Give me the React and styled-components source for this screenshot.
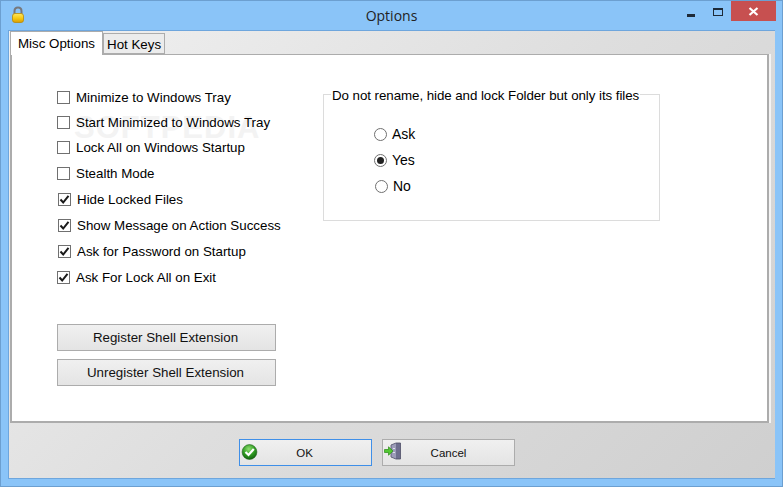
import React from 'react'
import styled, { createGlobalStyle } from 'styled-components'

const GlobalStyle = createGlobalStyle`
  html, body { margin: 0; padding: 0; background: #8ac4f8; }
  * { box-sizing: border-box; }
`

const Window = styled.div`
  width: 783px;
  height: 487px;
  display: flex;
  flex-direction: column;
  padding: 0 7px 7px;
  background: #8ac4f8;
  border: 1px solid #6c9fd0;
  font-family: "Liberation Sans", Arial, sans-serif;
  font-size: 13.33px;
  color: #000;
  overflow: hidden;
`

const TitleBar = styled.div`
  height: 29px;
  flex: none;
  position: relative;
  display: flex;
  align-items: center;
  justify-content: center;
  font-family: "Open Sans", sans-serif;
  font-size: 14px;
  color: #222;
  padding-bottom: 1px;
`

const LockIcon = styled.svg`
  position: absolute;
  left: 2px;
  top: 5px;
`

const WinButtons = styled.div`
  position: absolute;
  right: -1px;
  top: 0;
  display: flex;
  align-items: flex-start;
`

const WinIconButton = styled.div`
  width: ${p => p.$w}px;
  height: 20px;
  display: flex;
  align-items: center;
  justify-content: center;
`

const CloseButton = styled(WinIconButton)`
  background: #c75050;
`

const MinGlyph = styled.div`
  width: 8px;
  height: 3px;
  background: #1e2a38;
  margin-top: 8px;
`

const MaxGlyph = styled.div`
  width: 10px;
  height: 8px;
  border: 1px solid #1e2a38;
  border-top-width: 2px;
  margin-top: 2px;
`

const Client = styled.div`
  flex: 1;
  min-height: 0;
  display: flex;
  flex-direction: column;
  padding: 0 6px 0 1px;
  background: linear-gradient(135deg, #f1f1f1 0%, #dedede 50%, #cfcfcf 100%);
  border: 1px solid #6ea6dd;
  border-width: 1px 0 1px 1px;
`

const TabStrip = styled.div`
  display: flex;
  align-items: flex-end;
  height: 23px;
  flex: none;
  position: relative;
  z-index: 1;
`

const Tab = styled.div`
  height: ${p => (p.$active ? 24 : 21)}px;
  width: ${p => p.$w}px;
  margin-bottom: ${p => (p.$active ? -1 : 0)}px;
  padding-left: ${p => (p.$active ? 7 : 3)}px;
  padding-top: ${p => (p.$active ? 3 : 2)}px;
  line-height: 17px;
  font-size: 13.33px;
  background: ${p => (p.$active ? '#fff' : '#ececec')};
  border: 1px solid #acacac;
  border-bottom: ${p => (p.$active ? 'none' : '1px solid #acacac')};
`

const Page = styled.div`
  height: 369px;
  flex: none;
  background: #fff;
  border: 2px solid #acacac;
  border-width: 1px 2px 2px 2px;
  box-shadow: 2px 0 0 #f4f4f4;
  display: flex;
  position: relative;
  padding: 30px 0 0 45px;
`

const Watermark = styled.div`
  position: absolute;
  left: 62px;
  top: 55px;
  font-size: 31px;
  font-weight: 700;
  letter-spacing: 1px;
  color: #f3f3f3;
`

const LeftColumn = styled.div`
  width: 266px;
  flex: none;
  display: flex;
  flex-direction: column;
  position: relative;
`

const CheckRow = styled.div`
  height: ${p => p.$h}px;
  display: flex;
  align-items: center;
  gap: 6px;
  margin-left: ${p => p.$x || 0}px;
`

const Box = styled.span`
  width: 13px;
  height: 13px;
  flex: none;
  background: #fff;
  border: 1px solid #707070;
  display: flex;
  align-items: center;
  justify-content: center;
`

const Actions = styled.div`
  margin-top: 34px;
  display: flex;
  flex-direction: column;
  gap: 8px;
`

const Button = styled.div`
  width: ${p => p.$w}px;
  height: 27px;
  flex: none;
  display: flex;
  align-items: center;
  justify-content: center;
  position: relative;
  padding-right: ${p => p.$shift || 0}px;
  background: linear-gradient(#f0f0f0, #e4e4e4);
  border: 1px solid ${p => (p.$focus ? '#3f8fe8' : '#acacac')};
  font-size: ${p => p.$size || 13.33}px;
  color: #111;
`

const GroupBox = styled.div`
  margin-top: 9px;
  width: 337px;
  height: 127px;
  padding-left: 50px;
  border: 1px solid #dcdcdc;
  position: relative;
`

const GroupTitle = styled.div`
  position: absolute;
  left: 7px;
  top: -7px;
  padding: 0 1px;
  background: #fff;
  line-height: 15px;
  letter-spacing: -0.06px;
  white-space: nowrap;
`

const RadioList = styled.div`
  display: flex;
  flex-direction: column;
  margin-top: 26px;
`

const RadioRow = styled.div`
  height: 26px;
  display: flex;
  align-items: center;
  gap: 5px;
  font-size: 14px;
  margin-left: ${p => p.$x || 0}px;
`

const Radio = styled.span`
  width: 13px;
  height: 13px;
  flex: none;
  border-radius: 50%;
  border: 1px solid #707070;
  background: #fff;
  display: flex;
  align-items: center;
  justify-content: center;
`

const RadioDot = styled.span`
  width: 7px;
  height: 7px;
  border-radius: 50%;
  background: #222;
`

const Footer = styled.div`
  flex: 1;
  display: flex;
  gap: 10px;
  padding: 16px 0 0 229px;
`

const ButtonIcon = styled.svg`
  position: absolute;
  left: ${p => p.$l}px;
  top: ${p => p.$t}px;
`

const Tick = () => (
  <svg width="11" height="11" viewBox="0 0 11 11">
    <path d="M1.5 5.5 L4.2 8.5 L9.5 1.8" fill="none" stroke="#1a1a1a" strokeWidth="2" />
  </svg>
)

const Check = ({ label, on, h = 26, x }) => (
  <CheckRow $h={h} $x={x}>
    <Box>{on && <Tick />}</Box>
    {label}
  </CheckRow>
)

const Option = ({ label, on, x }) => (
  <RadioRow $x={x}>
    <Radio>{on && <RadioDot />}</Radio>
    {label}
  </RadioRow>
)

export default function App() {
  return (
    <>
      <GlobalStyle />
      <Window>
        <TitleBar>
          <LockIcon width="16" height="18" viewBox="0 0 16 18">
            <defs>
              <linearGradient id="lockBody" x1="0" y1="0" x2="0" y2="1">
                <stop offset="0" stopColor="#ffe860" />
                <stop offset="0.55" stopColor="#f6c810" />
                <stop offset="1" stopColor="#d89c04" />
              </linearGradient>
            </defs>
            <path d="M4.5 8V5.2C4.5 3 6 1.6 8 1.6S11.5 3 11.5 5.2V8" fill="none" stroke="#77787c" strokeWidth="2" />
            <rect x="2.5" y="7.5" width="11" height="9" rx="2.5" fill="url(#lockBody)" stroke="#b98a08" strokeWidth="0.8" />
          </LockIcon>
          Options
          <WinButtons>
            <WinIconButton $w={28}><MinGlyph /></WinIconButton>
            <WinIconButton $w={26}><MaxGlyph /></WinIconButton>
            <CloseButton $w={45}>
              <svg width="11" height="9" viewBox="0 0 11 9">
                <path d="M1.5 1 L9.5 8 M9.5 1 L1.5 8" stroke="#fff" strokeWidth="2.2" />
              </svg>
            </CloseButton>
          </WinButtons>
        </TitleBar>
        <Client>
          <TabStrip>
            <Tab $active $w={93}>Misc Options</Tab>
            <Tab $w={62}>Hot Keys</Tab>
          </TabStrip>
          <Page>
            <Watermark>SOFTPEDIA</Watermark>
            <LeftColumn>
              <Check h={25} label="Minimize to Windows Tray" />
              <Check h={25} label="Start Minimized to Windows Tray" />
              <Check h={25} label="Lock All on Windows Startup" />
              <Check label="Stealth Mode" />
              <Check x={1} on label="Hide Locked Files" />
              <Check x={1} on label="Show Message on Action Success" />
              <Check x={1} on label="Ask for Password on Startup" />
              <Check x={0} on label="Ask For Lock All on Exit" />
              <Actions>
                <Button $w={219} $shift={2}>Register Shell Extension</Button>
                <Button $w={219} $shift={2}>Unregister Shell Extension</Button>
              </Actions>
            </LeftColumn>
            <GroupBox>
              <GroupTitle>Do not rename, hide and lock Folder but only its files</GroupTitle>
              <RadioList>
                <Option label="Ask" />
                <Option on label="Yes" />
                <Option x={1} label="No" />
              </RadioList>
            </GroupBox>
          </Page>
          <Footer>
            <Button $w={133} $focus $size={11.5} $shift={2}>
              <ButtonIcon $l={1} $t={3} width="17" height="17" viewBox="0 0 17 17">
                <defs>
                  <radialGradient id="okBall" cx="0.45" cy="0.3" r="0.75">
                    <stop offset="0" stopColor="#8fe070" />
                    <stop offset="0.55" stopColor="#2f9a22" />
                    <stop offset="1" stopColor="#0f5c0c" />
                  </radialGradient>
                </defs>
                <circle cx="8.5" cy="9" r="7.4" fill="url(#okBall)" stroke="#1b5f15" strokeWidth="0.6" />
                <path d="M4.5 9 L7.5 12 L12.8 6" fill="none" stroke="#fff" strokeWidth="2.2" />
              </ButtonIcon>
              OK
            </Button>
            <Button $w={133} $size={11.5}>
              <ButtonIcon $l={1} $t={2} width="17" height="18" viewBox="0 0 17 18">
                <path d="M7 3 L12 1 H16.5 V17 H12 L7 15 Z" fill="#6e6e8e" stroke="#4e4e66" strokeWidth="0.8" />
                <path d="M7.5 3.3 L12 1.5 V16.5 L7.5 14.7 Z" fill="#9c9cb8" />
                <rect x="9" y="6" width="2" height="1" fill="#e2e2ee" />
                <rect x="9" y="10" width="2" height="1" fill="#e2e2ee" />
                <path d="M0.5 7.5 H4.5 V4.8 L9 9 L4.5 13.2 V10.5 H0.5 Z" fill="#52c832" stroke="#2a8a16" strokeWidth="0.7" />
              </ButtonIcon>
              Cancel
            </Button>
          </Footer>
        </Client>
      </Window>
    </>
  )
}
